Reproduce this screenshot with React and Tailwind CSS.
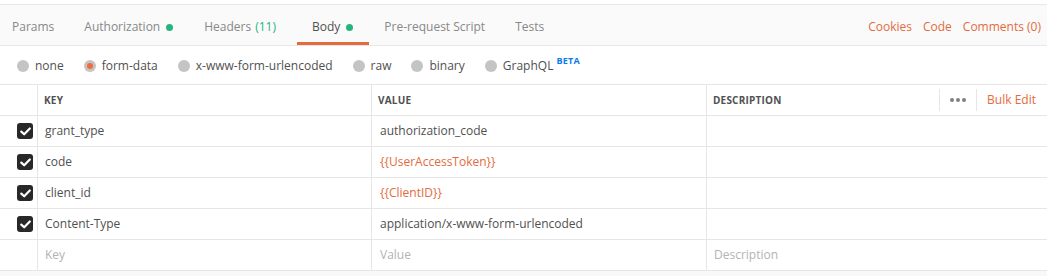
import React from "react";

const font = { fontFamily: '"Open Sans", "Liberation Sans", sans-serif' };

function Dot() {
  return <span className="inline-block w-[7px] h-[7px] rounded-full bg-[#26b47f] ml-[6px]" />;
}

function Radio({ label, checked, beta }) {
  return (
    <div className="flex items-center">
      <span className="w-[12px] h-[12px] rounded-full bg-[#c4c4c4] flex items-center justify-center">
        {checked && <span className="w-[6px] h-[6px] rounded-full bg-[#f26b3a]" />}
      </span>
      <span className="ml-[6px] text-[12px] text-[#505050]">{label}</span>
      {beta && (
        <span className="ml-[3px] -mt-[10px] text-[9px] font-bold text-[#097bed] tracking-[0.3px]">
          BETA
        </span>
      )}
    </div>
  );
}

function Check() {
  return (
    <span className="w-[16px] h-[16px] rounded-[3px] bg-[#282828] flex items-center justify-center">
      <svg width="11" height="9" viewBox="0 0 11 9">
        <path d="M1.3 4.6 L4.2 7.3 L9.8 1.5" stroke="#fff" strokeWidth="2.2" fill="none" strokeLinecap="round" strokeLinejoin="round" />
      </svg>
    </span>
  );
}

const rows = [
  { k: "grant_type", v: "authorization_code" },
  { k: "code", v: "{{UserAccessToken}}", orange: true },
  { k: "client_id", v: "{{ClientID}}", orange: true },
  { k: "Content-Type", v: "application/x-www-form-urlencoded" },
];

export default function App() {
  return (
    <div className="w-[1047px] h-[276px] bg-[#f8f8f8] overflow-hidden" style={font}>
      <div className="h-[4px] bg-white" />
      {/* tab bar */}
      <div className="h-[42px] bg-[#fafafa] border-t border-b border-[#e8e8e8] flex items-stretch justify-between">
        <div className="flex items-stretch ml-[-3px] text-[12px] text-[#888888]">
          <div className="px-[15px] pt-[4px] flex items-center">Params</div>
          <div className="px-[15px] pt-[4px] flex items-center">
            Authorization
            <Dot />
          </div>
          <div className="pl-[16px] pr-[15px] pt-[4px] flex items-center">
            Headers<span className="ml-[4px] text-[#26b47f]">(11)</span>
          </div>
          <div className="ml-[6px] pl-[15px] pr-[16px] pt-[4px] flex items-center relative text-[#505050]">
            Body
            <Dot />
            <span className="absolute left-0 right-0 bottom-0 h-[3px] bg-[#e46b3d]" />
          </div>
          <div className="px-[15px] pt-[4px] flex items-center">Pre-request Script</div>
          <div className="px-[15px] pt-[4px] flex items-center">Tests</div>
        </div>
        <div className="flex items-center pt-[4px] gap-[11px] pr-[6px] text-[12px] text-[#e46b3d]">
          <span>Cookies</span>
          <span>Code</span>
          <span>Comments (0)</span>
        </div>
      </div>
      {/* radio row */}
      <div className="h-[38px] bg-white flex items-center pl-[17px] pt-[1px] gap-[20px]">
        <Radio label="none" />
        <Radio label="form-data" checked />
        <Radio label="x-www-form-urlencoded" />
        <Radio label="raw" />
        <Radio label="binary" />
        <Radio label="GraphQL" beta />
      </div>
      {/* table */}
      <div className="bg-white border-t border-[#e6e6e6]">
        <div className="grid grid-cols-[37px_334px_335px_1fr] h-[31px] border-b border-[#e6e6e6] text-[10px] font-bold text-[#505050] tracking-[0.2px]">
          <div />
          <div className="border-l border-[#e6e6e6] flex items-center pl-[6px]">KEY</div>
          <div className="border-l border-[#e6e6e6] flex items-center pl-[6px]">VALUE</div>
          <div className="border-l border-[#e6e6e6] flex items-center">
            <div className="flex-1 pl-[6px]">DESCRIPTION</div>
            <div className="w-[37px] h-[22px] border-l border-[#e6e6e6] flex items-center justify-center gap-[2px]">
              <span className="w-[4px] h-[4px] rounded-full bg-[#808080]" />
              <span className="w-[4px] h-[4px] rounded-full bg-[#808080]" />
              <span className="w-[4px] h-[4px] rounded-full bg-[#808080]" />
            </div>
            <div className="h-[22px] border-l border-[#e6e6e6] flex items-center pl-[10px] pr-[11px] text-[12px] font-normal text-[#e46b3d] tracking-normal">
              Bulk Edit
            </div>
          </div>
        </div>
        {rows.map((r) => (
          <div
            key={r.k}
            className="grid grid-cols-[37px_334px_335px_1fr] h-[31px] border-b border-[#e6e6e6] text-[12px] text-[#505050]"
          >
            <div className="flex items-center justify-end pr-[4px]">
              <Check />
            </div>
            <div className="border-l border-[#e6e6e6] flex items-center pl-[7px]">{r.k}</div>
            <div
              className={
                "border-l border-[#e6e6e6] flex items-center pl-[8px] " +
                (r.orange ? "text-[#e46b3d]" : "")
              }
            >
              {r.v}
            </div>
            <div className="border-l border-[#e6e6e6]" />
          </div>
        ))}
        <div className="grid grid-cols-[37px_334px_335px_1fr] h-[31px] border-b border-[#e6e6e6] text-[12px] text-[#b3b3b3]">
          <div />
          <div className="border-l border-[#e6e6e6] flex items-center pl-[7px]">Key</div>
          <div className="border-l border-[#e6e6e6] flex items-center pl-[8px]">Value</div>
          <div className="border-l border-[#e6e6e6] flex items-center pl-[7px]">Description</div>
        </div>
      </div>
    </div>
  );
}
